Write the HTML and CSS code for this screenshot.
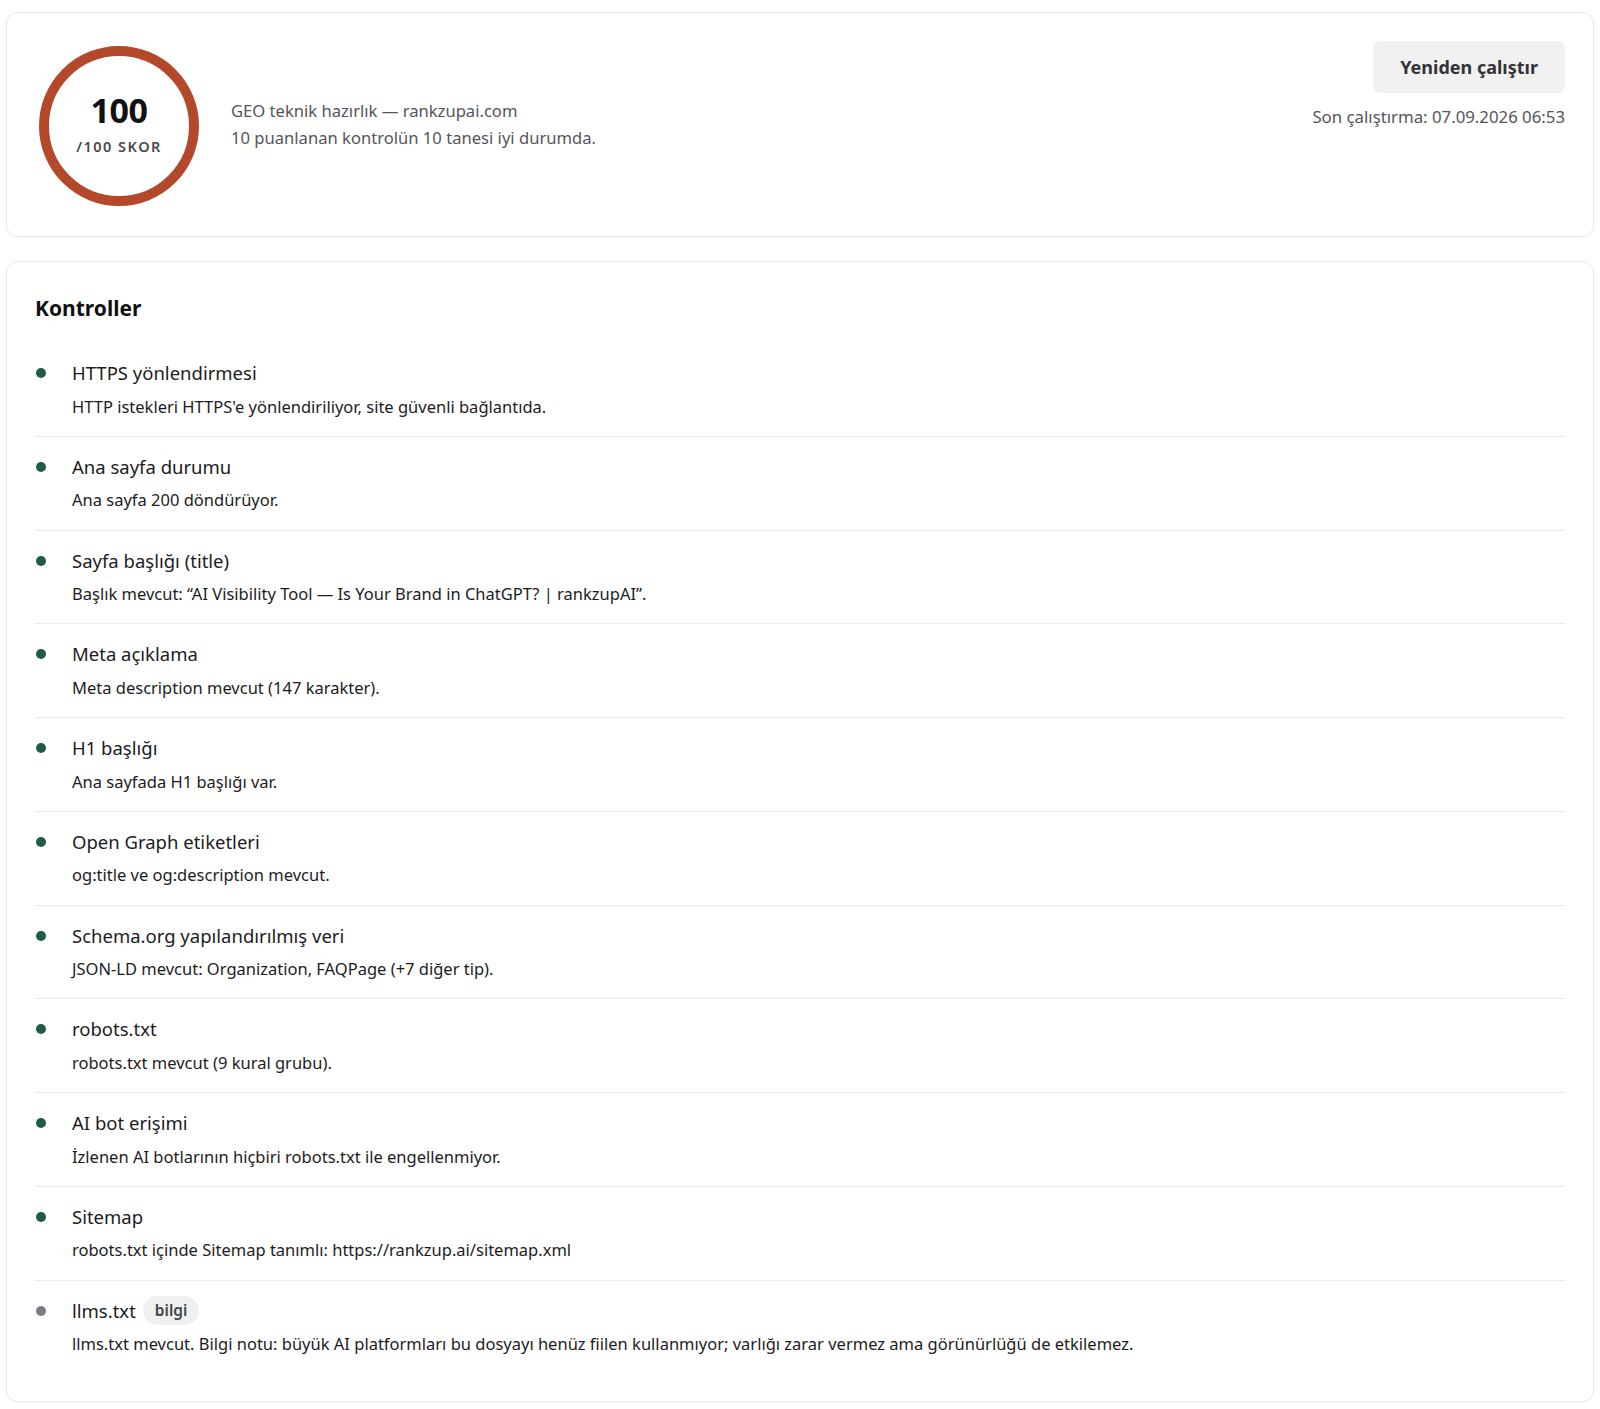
FILE: index.html
```html
<!DOCTYPE html>
<html lang="tr">
<head>
<meta charset="utf-8">
<title>GEO teknik hazırlık</title>
<link rel="stylesheet" href="styles.css">
</head>
<body>
<div class="page">
  <section class="card summary">
    <div class="score">
      <svg class="ring" width="164" height="164" viewBox="0 0 164 164">
        <circle cx="82" cy="82" r="75" fill="none" stroke="#b4482b" stroke-width="10"/>
      </svg>
      <div class="score-text">
        <div class="score-num">100</div>
        <div class="score-label">/100 SKOR</div>
      </div>
    </div>
    <div class="summary-info">
      <div class="summary-line">GEO teknik hazırlık — rankzupai.com</div>
      <div class="summary-line">10 puanlanan kontrolün 10 tanesi iyi durumda.</div>
    </div>
    <div class="summary-actions">
      <button class="btn">Yeniden çalıştır</button>
      <div class="last-run">Son çalıştırma: 07.09.2026 06:53</div>
    </div>
  </section>

  <section class="card checks">
    <h2 class="checks-title">Kontroller</h2>
    <ul class="check-list">
      <li class="check">
        <span class="dot ok"></span>
        <div class="check-body">
          <div class="check-name">HTTPS yönlendirmesi</div>
          <div class="check-desc">HTTP istekleri HTTPS'e yönlendiriliyor, site güvenli bağlantıda.</div>
        </div>
      </li>
      <li class="check">
        <span class="dot ok"></span>
        <div class="check-body">
          <div class="check-name">Ana sayfa durumu</div>
          <div class="check-desc">Ana sayfa 200 döndürüyor.</div>
        </div>
      </li>
      <li class="check">
        <span class="dot ok"></span>
        <div class="check-body">
          <div class="check-name">Sayfa başlığı (title)</div>
          <div class="check-desc">Başlık mevcut: “AI Visibility Tool — Is Your Brand in ChatGPT? | rankzupAI”.</div>
        </div>
      </li>
      <li class="check">
        <span class="dot ok"></span>
        <div class="check-body">
          <div class="check-name">Meta açıklama</div>
          <div class="check-desc">Meta description mevcut (147 karakter).</div>
        </div>
      </li>
      <li class="check">
        <span class="dot ok"></span>
        <div class="check-body">
          <div class="check-name">H1 başlığı</div>
          <div class="check-desc">Ana sayfada H1 başlığı var.</div>
        </div>
      </li>
      <li class="check">
        <span class="dot ok"></span>
        <div class="check-body">
          <div class="check-name">Open Graph etiketleri</div>
          <div class="check-desc">og:title ve og:description mevcut.</div>
        </div>
      </li>
      <li class="check">
        <span class="dot ok"></span>
        <div class="check-body">
          <div class="check-name">Schema.org yapılandırılmış veri</div>
          <div class="check-desc">JSON-LD mevcut: Organization, FAQPage (+7 diğer tip).</div>
        </div>
      </li>
      <li class="check">
        <span class="dot ok"></span>
        <div class="check-body">
          <div class="check-name">robots.txt</div>
          <div class="check-desc">robots.txt mevcut (9 kural grubu).</div>
        </div>
      </li>
      <li class="check">
        <span class="dot ok"></span>
        <div class="check-body">
          <div class="check-name">AI bot erişimi</div>
          <div class="check-desc">İzlenen AI botlarının hiçbiri robots.txt ile engellenmiyor.</div>
        </div>
      </li>
      <li class="check">
        <span class="dot ok"></span>
        <div class="check-body">
          <div class="check-name">Sitemap</div>
          <div class="check-desc">robots.txt içinde Sitemap tanımlı: https://rankzup.ai/sitemap.xml</div>
        </div>
      </li>
      <li class="check">
        <span class="dot info"></span>
        <div class="check-body">
          <div class="check-name">llms.txt <span class="badge">bilgi</span></div>
          <div class="check-desc">llms.txt mevcut. Bilgi notu: büyük AI platformları bu dosyayı henüz fiilen kullanmıyor; varlığı zarar vermez ama görünürlüğü de etkilemez.</div>
        </div>
      </li>
    </ul>
  </section>
</div>
</body>
</html>
```

FILE: styles.css
```css
* { box-sizing: border-box; }

html, body {
  margin: 0;
  padding: 0;
  background: #ffffff;
}

body {
  font-family: "Noto Sans", "Open Sans", "Liberation Sans", sans-serif;
  color: #1c1c1e;
}

.page {
  padding: 12px 6px 7px 6px;
  display: flex;
  flex-direction: column;
  gap: 24px;
}

.card {
  background: #fff;
  border: 1px solid #e9e9ea;
  border-radius: 12px;
  box-shadow: 0 1px 2px rgba(0, 0, 0, 0.04);
  padding: 28px;
}

.summary {
  display: flex;
  align-items: flex-start;
  height: 225px;
  padding-top: 28px;
}

.score {
  position: relative;
  width: 164px;
  height: 164px;
  margin-top: 3px;
  margin-left: 2px;
  flex: none;
}

.ring {
  display: block;
}

.score-text {
  position: absolute;
  inset: 0;
  display: flex;
  flex-direction: column;
  align-items: center;
  justify-content: center;
  padding-bottom: 3px;
}

.score-num {
  font-size: 34px;
  font-weight: 700;
  line-height: 40px;
  color: #111;
  letter-spacing: -0.5px;
  margin-top: -4px;
}

.score-label {
  font-size: 14.5px;
  font-weight: 600;
  letter-spacing: 1.5px;
  color: #4a4a4e;
  margin-top: 6px;
}

.summary-info {
  margin-left: 30px;
  margin-top: 57px;
  flex: 1;
}

.summary-line {
  font-size: 16.6px;
  line-height: 26.5px;
  color: #55555a;
}

.summary-actions {
  display: flex;
  flex-direction: column;
  align-items: flex-end;
}

.btn {
  font-family: inherit;
  font-size: 18px;
  font-weight: 700;
  color: #333338;
  background: #f1f1f2;
  border: none;
  border-radius: 8px;
  height: 52px;
  padding: 0 27px;
  cursor: pointer;
}

.last-run {
  margin-top: 13px;
  font-size: 16.8px;
  line-height: 22px;
  color: #55555a;
}

.checks {
  padding-top: 31px;
}

.checks-title {
  margin: 0;
  font-size: 21px;
  line-height: 30px;
  font-weight: 700;
  color: #111;
}

.check-list {
  list-style: none;
  margin: 20px 0 0 0;
  padding: 0;
}

.check {
  display: flex;
  align-items: flex-start;
  padding: 18px 0 17.25px 0;
  border-bottom: 1px solid #ebebec;
}

.check:last-child {
  border-bottom: none;
}

.dot {
  flex: none;
  width: 10px;
  height: 10px;
  border-radius: 50%;
  margin: 7px 26px 0 1px;
}

.dot.ok { background: #1e5c48; }
.dot.info { background: #7b7b82; }

.check-body {
  flex: 1;
}

.check-name {
  font-size: 18.5px;
  line-height: 24px;
  height: 24px;
  color: #1c1c1e;
  display: flex;
  align-items: center;
}

.badge {
  display: inline-block;
  margin-left: 7px;
  padding: 0 12px;
  height: 29px;
  line-height: 29px;
  border-radius: 15px;
  background: #f0f0f1;
  font-size: 15.5px;
  font-weight: 600;
  color: #44444a;
}

.check-desc {
  margin-top: 9.5px;
  font-size: 16.5px;
  line-height: 24px;
  color: #1c1c1e;
}
```
